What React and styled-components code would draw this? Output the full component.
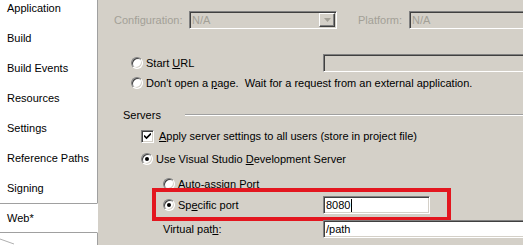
import React from "react";
import styled, { createGlobalStyle } from "styled-components";

const Global = createGlobalStyle`
  html, body { margin: 0; padding: 0; overflow: hidden; }
  body { font-family: "Liberation Sans", Arial, sans-serif; font-size: 11px; color: #000; }
`;

const Page = styled.div`
  display: flex;
  width: 523px;
  height: 245px;
  overflow: hidden;
  background: #d4d0c8;
`;

const Sidebar = styled.div`
  width: 98px;
  flex: none;
  display: flex;
  flex-direction: column;
  background: #fff;
  overflow: hidden;
`;

const TabList = styled.div`
  display: flex;
  flex-direction: column;
  margin-top: -7px;
  flex: 1;
`;

const Tab = styled.div`
  box-sizing: border-box;
  height: 30px;
  flex: none;
  display: flex;
  align-items: center;
  padding-left: 7px;
  border-right: ${(p) => (p.$active ? "1px solid transparent" : "1px solid #a0a0a0")};
  border-top: ${(p) => (p.$active ? "1px solid #a0a0a0" : "none")};
  border-bottom: ${(p) => (p.$active ? "1px solid #a0a0a0" : "none")};
  white-space: nowrap;
`;

const Filler = styled.div`
  flex: 1;
  border-right: 1px solid #a0a0a0;
  position: relative;
`;

const Content = styled.div`
  flex: 1;
  display: flex;
  flex-direction: column;
  overflow: hidden;
  white-space: nowrap;
`;

const Row = styled.div`
  display: flex;
  align-items: center;
  flex: none;
  height: ${(p) => p.$h || 14}px;
  margin-top: ${(p) => p.$mt || 0}px;
  padding-left: ${(p) => p.$pl || 0}px;
  position: relative;
`;

const Lead = styled.div`
  display: flex;
  align-items: center;
  flex: none;
  width: ${(p) => (p.$w ? `${p.$w}px` : "auto")};
  color: ${(p) => (p.$disabled ? "#a3a097" : "#000")};
`;

const Text = styled.span`
  white-space: pre;
`;

const Sunken = styled.div`
  box-sizing: border-box;
  flex: none;
  height: 18px;
  width: ${(p) => p.$w}px;
  margin-left: ${(p) => p.$ml || 0}px;
  border: 1px solid;
  border-color: #808080 #fff #fff #808080;
  box-shadow: inset 1px 1px 0 #404040, inset -1px -1px 0 #d4d0c8;
  background: ${(p) => (p.$white ? "#fff" : "#d4d0c8")};
  color: ${(p) => (p.$disabled ? "#a3a097" : "#000")};
  display: flex;
  align-items: center;
  padding-left: 2px;
  position: relative;
`;

const DropBtn = styled.div`
  position: absolute;
  right: 1px;
  top: 1px;
  width: 16px;
  height: 14px;
  box-sizing: border-box;
  background: #d4d0c8;
  border: 1px solid;
  border-color: #fff #404040 #404040 #fff;
  box-shadow: inset -1px -1px 0 #808080;
  display: flex;
  align-items: center;
  justify-content: center;
`;

const Caret = styled.span`
  display: inline-block;
  width: 1px;
  height: 13px;
  background: #000;
  margin-left: 1px;
`;

const RadioDot = styled.span`
  box-sizing: border-box;
  width: 12px;
  height: 12px;
  flex: none;
  border-radius: 50%;
  border: 1px solid;
  border-color: #808080 #fff #fff #808080;
  box-shadow: inset 1px 1px 0 #404040, inset -1px -1px 0 #d4d0c8;
  background: #fff;
  display: flex;
  align-items: center;
  justify-content: center;
  margin-right: ${(p) => p.$gap ?? 3}px;
  &::after {
    content: "";
    display: ${(p) => (p.$checked ? "block" : "none")};
    width: 4px;
    height: 4px;
    border-radius: 50%;
    background: #000;
  }
`;

const CheckBox = styled.span`
  box-sizing: border-box;
  width: 13px;
  height: 13px;
  flex: none;
  border: 1px solid;
  border-color: #808080 #fff #fff #808080;
  box-shadow: inset 1px 1px 0 #404040, inset -1px -1px 0 #d4d0c8;
  background: #fff;
  margin-right: 5px;
  display: flex;
  align-items: center;
  justify-content: center;
`;

const SectionTitle = styled.span`
  width: 62px;
  flex: none;
`;

const Etched = styled.div`
  flex: 1;
  height: 0;
  border-top: 1px solid #a0a0a0;
  border-bottom: 1px solid #fff;
`;

const Highlight = styled.div`
  position: absolute;
  left: 54px;
  top: -8px;
  width: 299px;
  height: 33px;
  box-sizing: border-box;
  border: 4px solid #e3161f;
  pointer-events: none;
`;

const U = styled.span`
  text-decoration: underline;
`;

const tabs = [
  "Application",
  "Build",
  "Build Events",
  "Resources",
  "Settings",
  "Reference Paths",
  "Signing",
  "Web*",
];

export default function App() {
  return (
    <>
      <Global />
      <Page>
        <Sidebar>
          <TabList>
            {tabs.map((t) => (
              <Tab key={t} $active={t === "Web*"}>
                {t}
              </Tab>
            ))}
            <Filler>
              <svg width="20" height="12" style={{ position: "absolute", left: 0, top: 5 }}>
                <line x1="0" y1="1" x2="14" y2="6" stroke="#b0b0b0" strokeWidth="1" />
              </svg>
            </Filler>
          </TabList>
        </Sidebar>
        <Content>
          <Row $h={18} $mt={11} $pl={16}>
            <Lead $w={75} $disabled>
              <Text>Configuration:</Text>
            </Lead>
            <Sunken $w={148} $disabled>
              <Text>N/A</Text>
              <DropBtn>
                <svg width="7" height="4" viewBox="0 0 7 4">
                  <path d="M0 0h7L3.5 4z" fill="#a3a097" />
                </svg>
              </DropBtn>
            </Sunken>
            <Lead $w={51} $disabled style={{ marginLeft: 21 }}>
              <Text>Platform:</Text>
            </Lead>
            <Sunken $w={140} $disabled>
              <Text>N/A</Text>
            </Sunken>
          </Row>
          <Row $h={18} $mt={25} $pl={33}>
            <Lead $w={192}>
              <RadioDot />
              <Text>
                Start <U>U</U>RL
              </Text>
            </Lead>
            <Sunken $w={220} />
          </Row>
          <Row $mt={4} $pl={33}>
            <Lead>
              <RadioDot />
              <Text>
                {"Don't open a "}
                <U>p</U>
                {"age.  Wait for a request from an external application."}
              </Text>
            </Lead>
          </Row>
          <Row $mt={18} $pl={25}>
            <SectionTitle>Servers</SectionTitle>
            <Etched />
          </Row>
          <Row $mt={7} $pl={43}>
            <Lead>
              <CheckBox>
                <svg width="7" height="7" viewBox="0 0 7 7">
                  <path d="M0 2.5l2.5 2.5L7 0.5" stroke="#000" strokeWidth="1.6" fill="none" />
                </svg>
              </CheckBox>
              <Text>
                <U>A</U>pply server settings to all users (store in project file)
              </Text>
            </Lead>
          </Row>
          <Row $mt={9} $pl={43}>
            <Lead>
              <RadioDot $checked />
              <Text>
                {"Use Visual Studio "}
                <U>D</U>
                {"evelopment Server"}
              </Text>
            </Lead>
          </Row>
          <Row $mt={11} $pl={65}>
            <Lead>
              <RadioDot />
              <Text>Auto-assign Port</Text>
            </Lead>
          </Row>
          <Row $h={18} $mt={5} $pl={65}>
            <Lead $w={160}>
              <RadioDot $checked />
              <Text>
                Sp<U>e</U>cific port
              </Text>
            </Lead>
            <Sunken $w={107} $white>
              <Text>8080</Text>
              <Caret />
            </Sunken>
            <Highlight />
          </Row>
          <Row $h={18} $mt={6} $pl={65}>
            <Lead $w={160}>
              <Text>
                Virtual pat<U>h</U>:
              </Text>
            </Lead>
            <Sunken $w={220} $white>
              <Text>/path</Text>
            </Sunken>
          </Row>
        </Content>
      </Page>
    </>
  );
}
